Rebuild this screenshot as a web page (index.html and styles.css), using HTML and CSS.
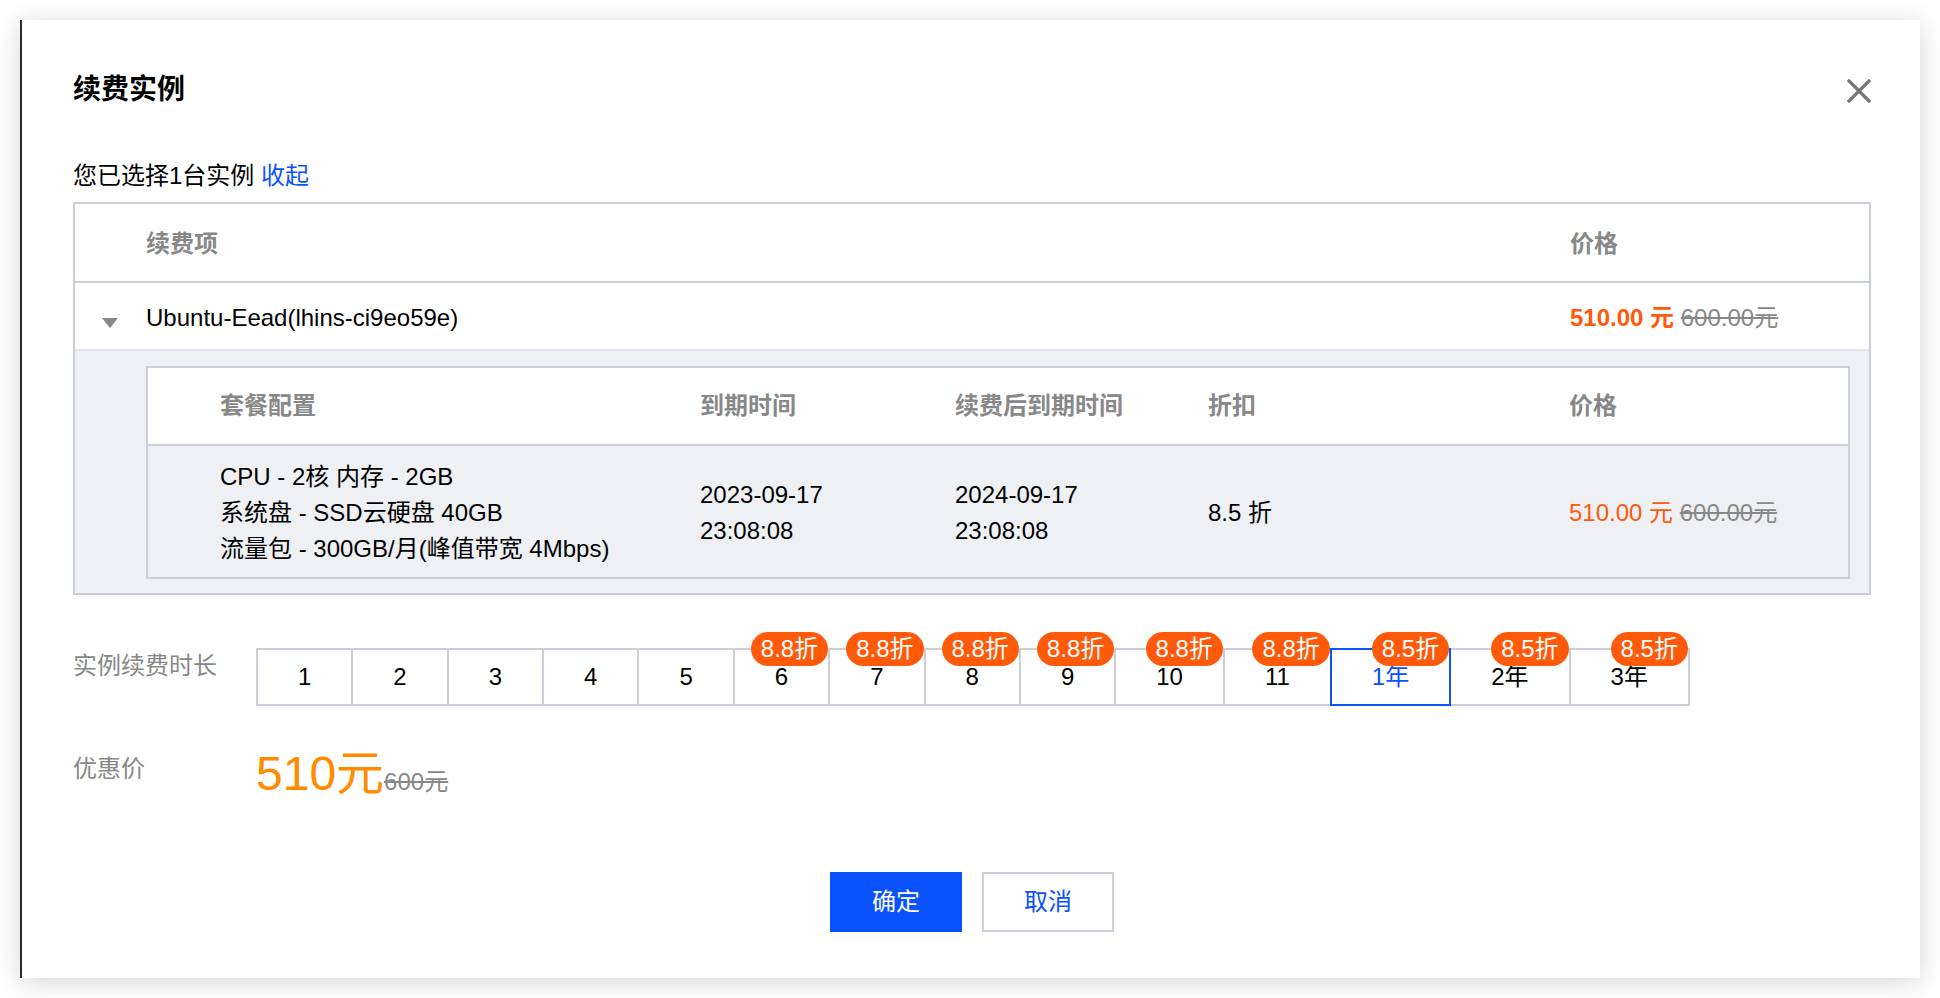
FILE: index.html
```html
<!DOCTYPE html>
<html lang="zh-CN">
<head>
<meta charset="utf-8">
<title>续费实例</title>
<link rel="stylesheet" href="styles.css">
</head>
<body>
<div class="dialog">
  <div class="dlg-head">
    <h2 class="title">续费实例</h2>
    <span class="close" aria-label="关闭">
      <svg width="24" height="24" viewBox="0 0 24 24"><path d="M2 2 L22 22 M22 2 L2 22" stroke="#777" stroke-width="3.2" stroke-linecap="square" fill="none"/></svg>
    </span>
  </div>

  <div class="selected">您已选择1台实例 <span class="link">收起</span></div>

  <div class="tbl">
    <div class="tbl-head">
      <span></span>
      <span>续费项</span>
      <span>价格</span>
    </div>
    <div class="tbl-row">
      <span class="caret-cell"><span class="caret"></span></span>
      <span>Ubuntu-Eead(lhins-ci9eo59e)</span>
      <span class="price"><b>510.00 元</b> <s>600.00元</s></span>
    </div>
    <div class="expand">
      <div class="sub">
        <div class="sub-head">
          <span>套餐配置</span>
          <span>到期时间</span>
          <span>续费后到期时间</span>
          <span>折扣</span>
          <span>价格</span>
        </div>
        <div class="sub-body">
          <span>CPU - 2核 内存 - 2GB<br>系统盘 - SSD云硬盘 40GB<br>流量包 - 300GB/月(峰值带宽 4Mbps)</span>
          <span>2023-09-17<br>23:08:08</span>
          <span>2024-09-17<br>23:08:08</span>
          <span>8.5 折</span>
          <span class="price-sm">510.00 元 <s>600.00元</s></span>
        </div>
      </div>
    </div>
  </div>

  <div class="field">
    <div class="label">实例续费时长</div>
    <div class="tabs">
      <span class="tab">1</span>
      <span class="tab">2</span>
      <span class="tab">3</span>
      <span class="tab">4</span>
      <span class="tab">5</span>
      <span class="tab">6<i class="badge">8.8折</i></span>
      <span class="tab">7<i class="badge">8.8折</i></span>
      <span class="tab">8<i class="badge">8.8折</i></span>
      <span class="tab">9<i class="badge">8.8折</i></span>
      <span class="tab">10<i class="badge">8.8折</i></span>
      <span class="tab">11<i class="badge">8.8折</i></span>
      <span class="tab is-active">1年<i class="badge">8.5折</i></span>
      <span class="tab">2年<i class="badge">8.5折</i></span>
      <span class="tab">3年<i class="badge">8.5折</i></span>
    </div>
  </div>

  <div class="field field-price">
    <div class="label">优惠价</div>
    <div class="big-price"><span class="now">510元</span><s class="old">600元</s></div>
  </div>

  <div class="actions">
    <span class="btn btn-primary">确定</span>
    <span class="btn btn-default">取消</span>
  </div>
</div>
</body>
</html>
```

FILE: styles.css
```css
* { box-sizing: border-box; }

html, body {
  margin: 0;
  background: #ffffff;
}

body {
  padding: 20px;
  font-family: "Liberation Sans", "Noto Sans CJK SC", sans-serif;
  font-size: 24px;
  line-height: 36px;
  color: #000;
}

.dialog {
  width: 1900px;
  height: 958px;
  background: #fff;
  border-left: 2px solid #2c2c2c;
  box-shadow: 0 4px 26px rgba(0, 0, 0, 0.16);
  padding: 50px 49px 47px 51px;
}

.dlg-head {
  display: flex;
  justify-content: space-between;
  align-items: center;
  height: 40px;
}

.title {
  margin: 0;
  font-size: 28px;
  line-height: 40px;
  font-weight: bold;
  color: #000;
}

.close {
  display: flex;
  width: 24px;
  height: 24px;
  margin-top: 2px;
}

.selected {
  margin-top: 48px;
  color: #000;
}

.link { color: #0a52ff; }

.tbl {
  margin-top: 8px;
  border: 2px solid #c9ced8;
}

.tbl-head,
.tbl-row {
  display: grid;
  grid-template-columns: 71px 1424px 1fr;
  align-items: center;
}

.tbl-head {
  height: 79px;
  border-bottom: 2px solid #c9ced8;
  color: #888;
  font-weight: bold;
  padding-top: 2px;
}

.tbl-row {
  height: 68px;
  border-bottom: 2px solid #e1e4ea;
  padding-top: 3px;
}

.caret-cell {
  display: flex;
  align-self: center;
  margin-top: 10px;
  padding-left: 27px;
}

.caret {
  width: 0;
  height: 0;
  border-left: 8px solid transparent;
  border-right: 8px solid transparent;
  border-top: 10px solid #888;
}

.price b {
  color: #ff5a0a;
  font-weight: bold;
}

.price s,
.price-sm s {
  color: #888;
}

.expand {
  background: #eef0f4;
  padding: 15px 19px 14px 71px;
}

.sub {
  border: 2px solid #c9ced8;
}

.sub-head,
.sub-body {
  display: grid;
  grid-template-columns: 480px 255px 253px 361px 1fr;
  align-items: center;
  padding-left: 72px;
}

.sub-head {
  height: 78px;
  background: #fff;
  border-bottom: 2px solid #c9ced8;
  color: #888;
  font-weight: bold;
}

.sub-body {
  height: 131px;
  background: #eef0f4;
  padding-top: 3px;
}

.price-sm { color: #ff5a0a; }

.field {
  display: flex;
  align-items: flex-start;
  margin-top: 53px;
}

.label {
  width: 183px;
  flex: none;
  color: #888;
}

.tabs {
  display: flex;
}

.tab {
  position: relative;
  height: 58px;
  padding: 0 40px;
  border: 2px solid #c9ced8;
  margin-left: -2px;
  line-height: 54px;
  text-align: center;
  color: #000;
  background: #fff;
}

.tab:first-child { margin-left: 0; }

.tab.is-active {
  z-index: 1;
  border-color: #0a52ff;
  color: #0a52ff;
}

.badge {
  position: absolute;
  right: 0;
  top: -18px;
  z-index: 2;
  height: 34px;
  padding: 0 10px;
  border-radius: 17px;
  background: #ff5a0a;
  color: #fff;
  font-style: normal;
  line-height: 34px;
  white-space: nowrap;
}

.field-price {
  margin-top: 44px;
}

.field-price .label {
  padding-top: 1px;
}

.big-price {
  line-height: 48px;
  height: 48px;
}

.big-price .now {
  font-size: 48px;
  color: #ff8b00;
}

.big-price .old {
  font-size: 24px;
  line-height: 24px;
  color: #888;
}

.actions {
  display: flex;
  justify-content: center;
  gap: 20px;
  margin-top: 74px;
}

.btn {
  display: inline-flex;
  align-items: center;
  height: 60px;
  font-size: 24px;
}

.btn-primary {
  padding: 0 42px;
  background: #0a52ff;
  color: #fff;
}

.btn-default {
  padding: 0 40px;
  border: 2px solid #c9ced8;
  background: #fff;
  color: #0a52ff;
}
```
